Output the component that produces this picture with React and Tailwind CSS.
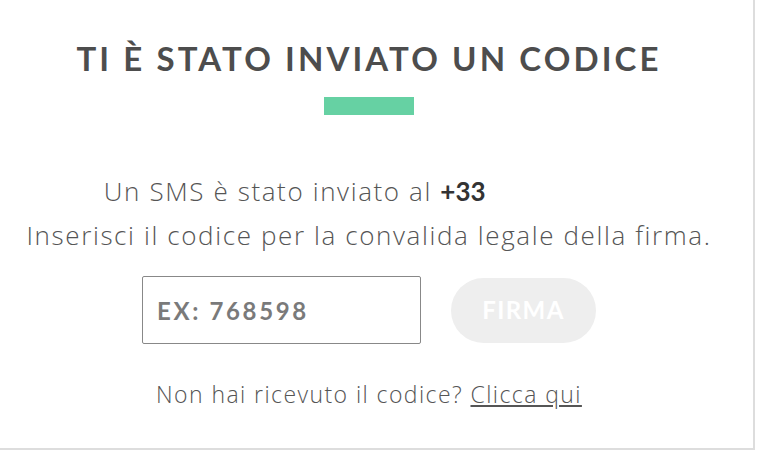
import React, { useState } from 'react';

const App = () => {
  const [code, setCode] = useState('');

  return (
    <div className="w-[755px] h-[450px] bg-white border-r-2 border-b-2 border-[#dddddd] font-['Lato','Liberation_Sans',sans-serif]">
      <div className="w-[738px] flex flex-col items-center pt-[38px]">
        <h1 className="text-[33px] leading-[40px] font-bold tracking-[0.094em] text-[#4d4d4d]">
          TI È STATO INVIATO UN CODICE
        </h1>
        <div className="w-[90px] h-[18px] bg-[#66d1a3] mt-[19px]"></div>

        <div className="mt-[54px] text-center text-[#555555] text-[26px] font-light tracking-[0.062em] leading-[44px] font-['Open_Sans','Lato',sans-serif]">
          <p>
            Un SMS è stato inviato al <span className="font-bold tracking-normal text-[#333333] font-['Lato',sans-serif]">+33</span>
            <span className="text-transparent select-none"> 6 12 34 56</span>
          </p>
          <p>Inserisci il codice per la convalida legale della firma.</p>
        </div>

        <div className="flex items-center gap-[30px] mt-[19px]">
          <input
            value={code}
            onChange={e => setCode(e.target.value)}
            placeholder="EX: 768598"
            className="w-[279px] h-[68px] border border-[#888888] rounded-[2px] px-[14px] text-[24px] font-bold tracking-[0.11em] text-[#555555] placeholder:text-[#7a7a7a] outline-none"
          />
          <button
            disabled
            className="w-[145px] h-[65px] rounded-full bg-[#eeeeee] text-white text-[24px] font-bold tracking-[0.06em]"
          >
            FIRMA
          </button>
        </div>

        <p className="mt-[33px] text-[23px] font-light tracking-[0.062em] text-[#555555] font-['Open_Sans','Lato',sans-serif]">
          Non hai ricevuto il codice? <a href="#" className="underline">Clicca qui</a>
        </p>
      </div>
    </div>
  );
};

export default App;
